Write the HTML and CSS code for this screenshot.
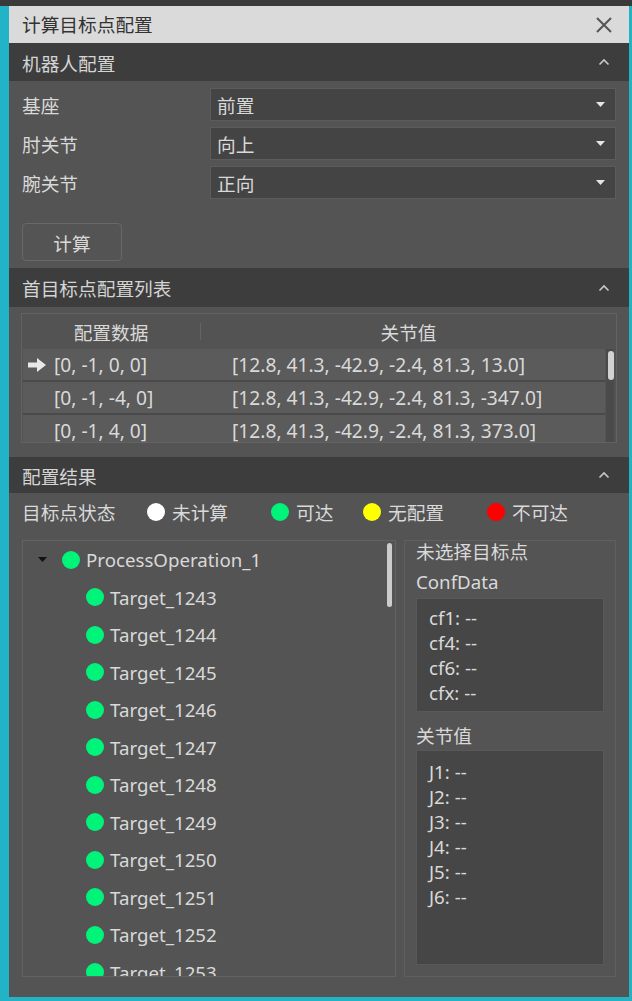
FILE: index.html
```html
<!DOCTYPE html>
<html lang="zh">
<head>
<meta charset="utf-8">
<title>计算目标点配置</title>
<link rel="stylesheet" href="styles.css">
</head>
<body>
<div class="window">
  <div class="titlebar">
    <span class="title">计算目标点配置</span>
    <svg class="close" width="18" height="18" viewBox="0 0 18 18"><path d="M2 2 L16 16 M16 2 L2 16" stroke="#555" stroke-width="2" fill="none"/></svg>
  </div>

  <div class="section-header sh1">
    <span>机器人配置</span>
    <svg class="chev" width="12" height="8" viewBox="0 0 12 8"><path d="M1.5 6.5 L6 2 L10.5 6.5" stroke="#c8c8c8" stroke-width="1.6" fill="none"/></svg>
  </div>
  <div class="panel robot">
    <div class="form">
      <div class="label">基座</div>
      <div class="select"><span>前置</span><svg class="tri" width="9" height="5" viewBox="0 0 9 5"><path d="M0 0 H9 L4.5 5 Z" fill="#e6e6e6"/></svg></div>
      <div class="label">肘关节</div>
      <div class="select"><span>向上</span><svg class="tri" width="9" height="5" viewBox="0 0 9 5"><path d="M0 0 H9 L4.5 5 Z" fill="#e6e6e6"/></svg></div>
      <div class="label">腕关节</div>
      <div class="select"><span>正向</span><svg class="tri" width="9" height="5" viewBox="0 0 9 5"><path d="M0 0 H9 L4.5 5 Z" fill="#e6e6e6"/></svg></div>
    </div>
    <div class="btn">计算</div>
  </div>

  <div class="section-header sh2">
    <span>首目标点配置列表</span>
    <svg class="chev" width="12" height="8" viewBox="0 0 12 8"><path d="M1.5 6.5 L6 2 L10.5 6.5" stroke="#c8c8c8" stroke-width="1.6" fill="none"/></svg>
  </div>
  <div class="panel list">
    <div class="table">
      <div class="thead">
        <div class="th th1">配置数据</div>
        <div class="th th2">关节值</div>
      </div>
      <div class="tbody">
        <div class="rows">
          <div class="row">
            <div class="c1"><span class="mark"><svg width="18" height="14" viewBox="0 0 18 14"><path d="M0 4.5 H9 V0 L18 7 L9 14 V9.5 H0 Z" fill="#e8e8e8"/></svg></span>[0, -1, 0, 0]</div>
            <div class="c2">[12.8, 41.3, -42.9, -2.4, 81.3, 13.0]</div>
          </div>
          <div class="row">
            <div class="c1"><span class="mark"></span>[0, -1, -4, 0]</div>
            <div class="c2">[12.8, 41.3, -42.9, -2.4, 81.3, -347.0]</div>
          </div>
          <div class="row">
            <div class="c1"><span class="mark"></span>[0, -1, 4, 0]</div>
            <div class="c2">[12.8, 41.3, -42.9, -2.4, 81.3, 373.0]</div>
          </div>
        </div>
        <div class="track"><div class="thumb"></div></div>
      </div>
    </div>
  </div>

  <div class="section-header sh3">
    <span>配置结果</span>
    <svg class="chev" width="12" height="8" viewBox="0 0 12 8"><path d="M1.5 6.5 L6 2 L10.5 6.5" stroke="#c8c8c8" stroke-width="1.6" fill="none"/></svg>
  </div>
  <div class="panel result">
    <div class="status">
      <div class="slabel">目标点状态</div>
      <div class="legend"><span class="dot white"></span>未计算</div>
      <div class="legend"><span class="dot green"></span>可达</div>
      <div class="legend"><span class="dot yellow"></span>无配置</div>
      <div class="legend"><span class="dot red"></span>不可达</div>
    </div>
    <div class="boxes">
      <div class="tree">
        <div class="trow parent"><svg class="expander" width="9" height="5" viewBox="0 0 9 5"><path d="M0 0 H9 L4.5 5 Z" fill="#111"/></svg><span class="dot green"></span>ProcessOperation_1</div>
        <div class="trow child"><span class="dot green"></span>Target_1243</div>
        <div class="trow child"><span class="dot green"></span>Target_1244</div>
        <div class="trow child"><span class="dot green"></span>Target_1245</div>
        <div class="trow child"><span class="dot green"></span>Target_1246</div>
        <div class="trow child"><span class="dot green"></span>Target_1247</div>
        <div class="trow child"><span class="dot green"></span>Target_1248</div>
        <div class="trow child"><span class="dot green"></span>Target_1249</div>
        <div class="trow child"><span class="dot green"></span>Target_1250</div>
        <div class="trow child"><span class="dot green"></span>Target_1251</div>
        <div class="trow child"><span class="dot green"></span>Target_1252</div>
        <div class="trow child"><span class="dot green"></span>Target_1253</div>
        <div class="tree-thumb"></div>
      </div>
      <div class="info">
        <div class="info-title">未选择目标点<br>ConfData</div>
        <div class="databox conf">
          <div>cf1: --</div>
          <div>cf4: --</div>
          <div>cf6: --</div>
          <div>cfx: --</div>
        </div>
        <div class="info-sub">关节值</div>
        <div class="databox joints">
          <div>J1: --</div>
          <div>J2: --</div>
          <div>J3: --</div>
          <div>J4: --</div>
          <div>J5: --</div>
          <div>J6: --</div>
        </div>
      </div>
    </div>
  </div>
</div>
</body>
</html>
```

FILE: styles.css
```css
html, body {
  margin: 0;
  padding: 0;
}
body {
  width: 632px;
  height: 1001px;
  overflow: hidden;
  background: linear-gradient(to bottom, #3a3a3a 0, #3a3a3a 6px, #22b4c6 6px, #22b4c6 100%);
  font-family: "Noto Sans", "Noto Sans CJK SC", sans-serif;
  font-size: 18.7px;
  color: #d9d9d9;
}
.window {
  margin: 6px 0 0 9px;
  width: 620px;
  height: 991px;
  background: #545454;
  display: flex;
  flex-direction: column;
  overflow: hidden;
}
.titlebar {
  height: 37px;
  flex: none;
  background: #dadada;
  color: #333;
  display: flex;
  align-items: center;
  justify-content: space-between;
  padding: 0 16px 0 13px;
}
.title { line-height: 37px; }
.close { display: block; }
.section-header {
  flex: none;
  background: #3d3d3d;
  display: flex;
  align-items: center;
  justify-content: space-between;
  padding: 0 19px 0 13px;
  color: #d4d4d4;
}
.chev { display: block; }
.sh1 { height: 38px; }
.sh2 { height: 39px; }
.sh3 { height: 36px; }
.panel { flex: none; }
.robot {
  padding: 7px 13px 7px 13px;
}
.form {
  display: grid;
  grid-template-columns: 188px 406px;
  grid-auto-rows: 33px;
  row-gap: 6px;
}
.label {
  display: flex;
  align-items: center;
}
.select {
  background: #444444;
  border: 1px solid #5c5c5c;
  display: flex;
  align-items: center;
  justify-content: space-between;
  padding: 0 10px 0 6px;
}
.tri { display: block; }
.btn {
  margin-top: 24px;
  width: 98px;
  height: 36px;
  border: 1px solid #686868;
  border-radius: 4px;
  display: flex;
  align-items: center;
  justify-content: center;
}
.list {
  padding: 6px 12px 14px 12px;
}
.table {
  border: 1px solid #626262;
  height: 128px;
  display: flex;
  flex-direction: column;
  background: #535353;
}
.thead {
  height: 35px;
  flex: none;
  display: flex;
  align-items: center;
}
.th { text-align: center; }
.th1 {
  width: 178px;
  height: 17px;
  border-right: 1px solid #646464;
  display: flex;
  align-items: center;
  justify-content: center;
}
.th2 { flex: 1; }
.tbody {
  flex: 1;
  display: flex;
  overflow: hidden;
  padding-left: 1px;
  font-size: 19.2px;
}
.rows {
  width: 582px;
  display: flex;
  flex-direction: column;
}
.row {
  height: 31px;
  flex: none;
  border-bottom: 2px solid #4a4a4a;
  background: #5b5b5b;
  display: flex;
  align-items: center;
}
.c1 {
  width: 209px;
  display: flex;
  align-items: center;
}
.mark {
  width: 31px;
  padding-left: 5px;
  box-sizing: border-box;
  display: flex;
  align-items: center;
}
.mark svg { display: block; }
.track {
  margin-left: 1px;
  width: 8px;
  background: #4a4a4a;
}
.thumb {
  margin: 2px 0 0 2px;
  width: 6px;
  height: 29px;
  border-radius: 3px;
  background: #d2d2d2;
}
.result {
  flex: 1;
  min-height: 0;
  padding: 0 13px 20px 13px;
  display: flex;
  flex-direction: column;
}
.status {
  height: 37px;
  flex: none;
  display: grid;
  grid-template-columns: 125px 124px 92px 124px auto;
  align-items: center;
}
.legend {
  display: flex;
  align-items: center;
}
.dot {
  display: inline-block;
  width: 18px;
  height: 18px;
  border-radius: 50%;
  flex: none;
  margin-right: 7px;
}
.white { background: #ffffff; }
.green { background: #00f47a; }
.yellow { background: #ffff00; }
.red { background: #ff0000; }
.boxes {
  margin-top: 10px;
  flex: 1;
  min-height: 0;
  display: flex;
  gap: 8px;
}
.tree {
  width: 374px;
  border: 1px solid #626262;
  box-sizing: border-box;
  overflow: hidden;
  position: relative;
}
.trow {
  height: 37.5px;
  display: flex;
  align-items: center;
}
.parent { padding-left: 15px; }
.expander { display: block; margin-right: 15px; }
.parent .dot { margin-right: 6px; }
.child { padding-left: 63px; }
.child .dot { margin-right: 6px; }
.tree-thumb {
  position: absolute;
  left: 364px;
  top: 2px;
  width: 5px;
  height: 64px;
  border-radius: 3px;
  background: #cccccc;
}
.info {
  flex: 1;
  border: 1px solid #5f5f5f;
  padding: 0 11px 11px 11px;
  display: flex;
  flex-direction: column;
}
.info-title {
  line-height: 30px;
  margin-top: -4px;
}
.databox {
  background: #464646;
  border: 1px solid #585858;
  padding-left: 12px;
  line-height: 25px;
  font-size: 18.7px;
}
.conf {
  margin-top: 1px;
  padding-top: 6px;
  box-sizing: border-box;
  flex: none;
  height: 114px;
}
.info-sub {
  margin-top: 10px;
  line-height: 28px;
}
.joints {
  flex: 1;
  padding-top: 8px;
}
```
